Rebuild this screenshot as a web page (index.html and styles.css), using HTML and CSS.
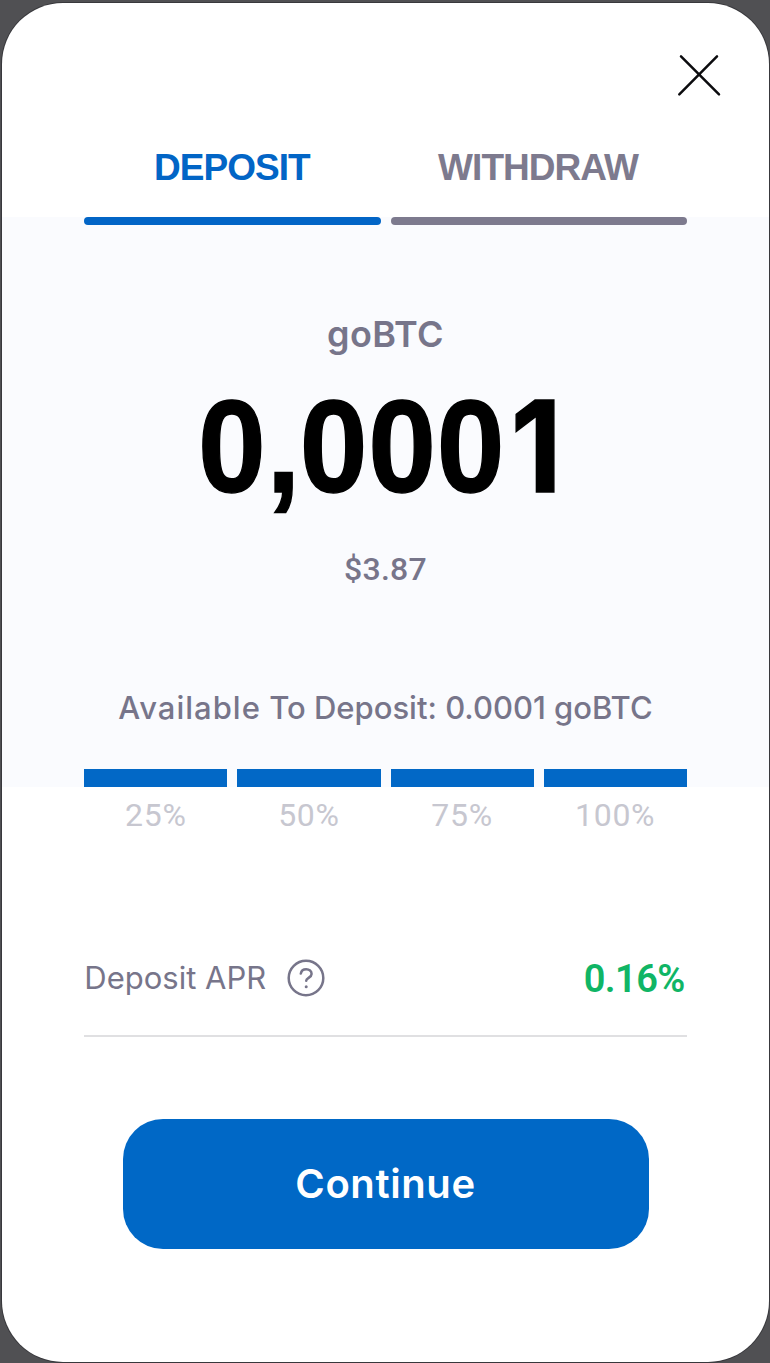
FILE: index.html
```html
<!DOCTYPE html>
<html lang="en">
<head>
<meta charset="utf-8">
<title>Deposit goBTC</title>
<link rel="stylesheet" href="styles.css">
</head>
<body>
<main class="modal">
  <header class="top">
    <button class="close" aria-label="Close">
      <svg width="44" height="44" viewBox="0 0 44 44"><path d="M4 3.4 42 41.4M40 3.4 2.3 41.4" fill="none" stroke="#0b0b0e" stroke-width="2.5" stroke-linecap="round"/></svg>
    </button>
  </header>
  <nav class="tabs">
    <a class="tab active">DEPOSIT</a>
    <a class="tab">WITHDRAW</a>
  </nav>
  <section class="amount">
    <div class="rules"><i class="rule active"></i><i class="rule"></i></div>
    <div class="asset"><span>goBTC</span></div>
    <div class="value">0<span class="comma">,</span>000<span class="one">1</span></div>
    <div class="fiat"><span>$3.87</span></div>
    <div class="available"><span class="wide">Available</span> To Deposit: 0.0001 goBTC</div>
    <div class="steps"><i class="step"></i><i class="step"></i><i class="step"></i><i class="step"></i></div>
  </section>
  <div class="labels"><span>25%</span><span>50%</span><span>75%</span><span>100%</span></div>
  <div class="apr">
    <span class="apr-name">Deposit APR</span>
    <svg class="help" width="38" height="38" viewBox="0 0 38 38" fill="none" stroke="#77758a" stroke-width="2.5" stroke-linecap="round" stroke-linejoin="round"><circle cx="19" cy="19" r="17.3"/><path d="M13.8 14.6C14.3 11.7 16.5 10.2 19.2 10.2C22.3 10.2 24.6 12.1 24.6 15C24.6 18.7 19.2 19 19.2 21.8"/><path d="M19.2 27.8h.01" stroke-width="3"/></svg>
    <span class="apr-value">0.16%</span>
  </div>
  <button class="continue"><span>Continue</span></button>
</main>
</body>
</html>
```
FILE: styles.css
```css
* { box-sizing: border-box; }
body {
  margin: 0;
  height: 1363px;
  padding: 3px 1.3px 1.5px 2.3px;
  background: #505053;
  font-family: Inter, sans-serif;
  color: #77758a;
  overflow: hidden;
}
button { border: 0; padding: 0; background: none; font: inherit; }
.modal {
  height: 100%;
  display: flex;
  flex-direction: column;
  background: #fff;
  border-radius: 61px;
  box-shadow: 0 0 0 1px #38383c;
}
.top { height: 131px; display: flex; justify-content: flex-end; padding: 50px 48px 0 0; }
.close { width: 44px; height: 44px; }
.close svg { display: block; }
.tabs {
  height: 83px;
  padding: 0 82px;
  display: grid;
  grid-template-columns: 1fr 1fr;
  column-gap: 10px;
}
.tab {
  font: 700 37px/68px "Liberation Sans", Arial, sans-serif;
  letter-spacing: -0.95px;
  padding-right: 1px;
  text-align: center;
  color: #7d7a8e;
}
.tab.active { color: #0265c6; }
.amount { height: 570px; padding: 0 82px; background: #fafbfe; text-align: center; display: flex; flex-direction: column; }
.rules { display: grid; grid-template-columns: 1fr 1fr; gap: 10px; }
.rule { height: 8px; border-radius: 4px; background: #7d7a8e; }
.rule.active { background: #0265c6; }
.asset { margin-top: 87px; font-size: 36px; line-height: 44px; font-weight: 600; letter-spacing: 0.3px; }
.value {
  margin: 16px 0 0 114px;
  height: 150px;
  font: 700 131px/150px "Liberation Sans", Arial, sans-serif;
  letter-spacing: 0.8px;
  text-align: left;
  white-space: nowrap;
  color: #000;
  -webkit-text-stroke: 1.4px #000;
  transform: scaleX(0.93);
  transform-origin: left;
}
.comma { letter-spacing: -0.7px; }
.one { font-family: Inter, sans-serif; font-size: 127px; line-height: 1; margin-left: 6px; }
.fiat { margin-top: 27px; font: 500 32px/40px Roboto, sans-serif; letter-spacing: 0.3px; }
.available { margin-top: 99px; font-size: 31px; line-height: 40px; font-weight: 500; white-space: nowrap; }
.wide { letter-spacing: 1px; }
.steps { margin-top: auto; display: grid; grid-template-columns: repeat(4, 1fr); gap: 10px; }
.step { height: 18px; background: #0268c6; }
.labels {
  padding: 8px 82px 0;
  display: grid;
  grid-template-columns: repeat(4, 1fr);
  gap: 10px;
  text-align: center;
  font: 400 32px/40px Roboto, sans-serif;
  letter-spacing: 0.7px;
  color: #c7c7d0;
}
.apr {
  margin: 107px 82px 0;
  height: 95px;
  padding-top: 12px;
  display: flex;
  align-items: flex-start;
  border-bottom: 2px solid #e0e0e2;
}
.apr-name { padding-top: 4px; font-size: 31px; line-height: 40px; }
.help { margin: 5px 0 0 21px; }
.apr-value { margin-left: auto; padding: 4px 2px 0 0; font: 600 38px/42px Roboto, sans-serif; letter-spacing: -0.6px; color: #10b565; }
.continue {
  width: 526px;
  height: 130px;
  margin: 82px auto 0;
  padding-bottom: 2px;
  border-radius: 40px;
  background: #0068c6;
  color: #fff;
  font-size: 40px;
  font-weight: 600;
  letter-spacing: 0.6px;
}
```
